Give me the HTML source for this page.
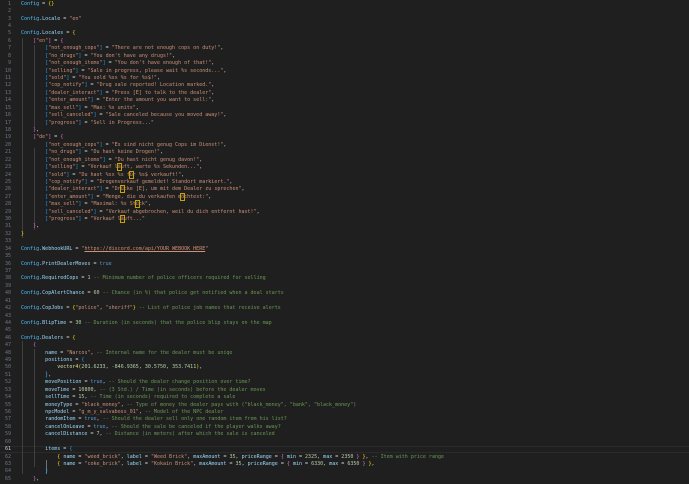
<!DOCTYPE html>
<html><head><meta charset="utf-8"><style>
html,body{margin:0;padding:0;background:#1f1f1f;width:689px;height:484px;overflow:hidden}
#ln{position:absolute;left:0;top:0.8px;width:11px;text-align:right;font:5.02px/7.42px "DejaVu Sans Mono","Liberation Mono",monospace;color:#6e7681;white-space:pre}
#code{position:absolute;left:21px;top:0.8px;font:5.02px/7.42px "DejaVu Sans Mono","Liberation Mono",monospace;color:#d4d4d4;white-space:pre;margin:0}
.c{color:#4fc1ff}.p{color:#9cdcfe}.s{color:#ce9178}.m{color:#6a9955}.n{color:#b5cea8}.k{color:#569cd6}.f{color:#dcdcaa}
.y{color:#ffd700}.v{color:#da70d6}.b{color:#179fff}.u{text-decoration:underline}
.x{outline:0.6px solid #c9a400}
.g{position:absolute;width:1px;background:#404040}
#cur{position:absolute;left:0;width:689px;top:445.7px;height:7.42px;border-top:1px solid #2a2a2a;border-bottom:1px solid #2a2a2a;box-sizing:border-box}
</style></head><body>
<div id="cur"></div>
<div class="g" style="left:22px;top:37.5px;height:200px"></div>
<div class="g" style="left:34px;top:45px;height:82px"></div>
<div class="g" style="left:34px;top:148px;height:82px"></div>
<div class="g" style="left:22px;top:341px;height:133px"></div>
<div class="g" style="left:34px;top:349px;height:118px"></div>
<div class="g" style="left:46px;top:371px;height:7px"></div>
<div class="g" style="left:46px;top:460px;height:14px;background:#707070"></div>
<div id="ln">1
2
3
4
5
6
7
8
9
10
11
12
13
14
15
16
17
18
19
20
21
22
23
24
25
26
27
28
29
30
31
32
33
34
35
36
37
38
39
40
41
42
43
44
45
46
47
48
49
50
51
52
53
54
55
56
57
58
59
60
<span style="color:#ccc">61</span>
62
63
64
65</div>
<pre id="code"><span class="c">Config</span> = <span class="y">{}</span>

<span class="c">Config</span>.<span class="p">Locale</span> = <span class="s">"en"</span>

<span class="c">Config</span>.<span class="p">Locales</span> = <span class="y">{</span>
    <span class="v">[</span><span class="s">"en"</span><span class="v">]</span> = <span class="v">{</span>
        <span class="b">[</span><span class="s">"not_enough_cops"</span><span class="b">]</span> = <span class="s">"There are not enough cops on duty!"</span>,
        <span class="b">[</span><span class="s">"no_drugs"</span><span class="b">]</span> = <span class="s">"You don't have any drugs!"</span>,
        <span class="b">[</span><span class="s">"not_enough_items"</span><span class="b">]</span> = <span class="s">"You don't have enough of that!"</span>,
        <span class="b">[</span><span class="s">"selling"</span><span class="b">]</span> = <span class="s">"Sale in progress, please wait %s seconds..."</span>,
        <span class="b">[</span><span class="s">"sold"</span><span class="b">]</span> = <span class="s">"You sold %sx %s for %s$!"</span>,
        <span class="b">[</span><span class="s">"cop_notify"</span><span class="b">]</span> = <span class="s">"Drug sale reported! Location marked."</span>,
        <span class="b">[</span><span class="s">"dealer_interact"</span><span class="b">]</span> = <span class="s">"Press [E] to talk to the dealer"</span>,
        <span class="b">[</span><span class="s">"enter_amount"</span><span class="b">]</span> = <span class="s">"Enter the amount you want to sell:"</span>,
        <span class="b">[</span><span class="s">"max_sell"</span><span class="b">]</span> = <span class="s">"Max: %s units"</span>,
        <span class="b">[</span><span class="s">"sell_canceled"</span><span class="b">]</span> = <span class="s">"Sale canceled because you moved away!"</span>,
        <span class="b">[</span><span class="s">"progress"</span><span class="b">]</span> = <span class="s">"Sell in Progress..."</span>
    <span class="v">}</span>,
    <span class="v">[</span><span class="s">"de"</span><span class="v">]</span> = <span class="v">{</span>
        <span class="b">[</span><span class="s">"not_enough_cops"</span><span class="b">]</span> = <span class="s">"Es sind nicht genug Cops im Dienst!"</span>,
        <span class="b">[</span><span class="s">"no_drugs"</span><span class="b">]</span> = <span class="s">"Du hast keine Drogen!"</span>,
        <span class="b">[</span><span class="s">"not_enough_items"</span><span class="b">]</span> = <span class="s">"Du hast nicht genug davon!"</span>,
        <span class="b">[</span><span class="s">"selling"</span><span class="b">]</span> = <span class="s">"Verkauf l<span class="x">ä</span>uft, warte %s Sekunden..."</span>,
        <span class="b">[</span><span class="s">"sold"</span><span class="b">]</span> = <span class="s">"Du hast %sx %s f<span class="x">ü</span>r %s$ verkauft!"</span>,
        <span class="b">[</span><span class="s">"cop_notify"</span><span class="b">]</span> = <span class="s">"Drogenverkauf gemeldet! Standort markiert."</span>,
        <span class="b">[</span><span class="s">"dealer_interact"</span><span class="b">]</span> = <span class="s">"Dr<span class="x">ü</span>cke [E], um mit dem Dealer zu sprechen"</span>,
        <span class="b">[</span><span class="s">"enter_amount"</span><span class="b">]</span> = <span class="s">"Menge, die du verkaufen m<span class="x">ö</span>chtest:"</span>,
        <span class="b">[</span><span class="s">"max_sell"</span><span class="b">]</span> = <span class="s">"Maximal: %s St<span class="x">ü</span>ck"</span>,
        <span class="b">[</span><span class="s">"sell_canceled"</span><span class="b">]</span> = <span class="s">"Verkauf abgebrochen, weil du dich entfernt hast!"</span>,
        <span class="b">[</span><span class="s">"progress"</span><span class="b">]</span> = <span class="s">"Verkauf l<span class="x">ä</span>uft..."</span>
    <span class="v">}</span>,
<span class="y">}</span>

<span class="c">Config</span>.<span class="p">WebhookURL</span> = <span class="s">"<span class="u">https://discord.com/api/YOUR_WEBOOK_HERE</span>"</span>

<span class="c">Config</span>.<span class="p">PrintDealerMoves</span> = <span class="k">true</span>

<span class="c">Config</span>.<span class="p">RequiredCops</span> = <span class="n">1</span> <span class="m">-- Minimum number of police officers required for selling</span>

<span class="c">Config</span>.<span class="p">CopAlertChance</span> = <span class="n">60</span> <span class="m">-- Chance (in %) that police get notified when a deal starts</span>

<span class="c">Config</span>.<span class="p">CopJobs</span> = <span class="y">{</span><span class="s">"police"</span>, <span class="s">"sheriff"</span><span class="y">}</span> <span class="m">-- List of police job names that receive alerts</span>

<span class="c">Config</span>.<span class="p">BlipTime</span> = <span class="n">30</span> <span class="m">-- Duration (in seconds) that the police blip stays on the map</span>

<span class="c">Config</span>.<span class="p">Dealers</span> = <span class="y">{</span>
    <span class="v">{</span>
        <span class="p">name</span> = <span class="s">"Narcos"</span>, <span class="m">-- Internal name for the dealer must be uniqe</span>
        <span class="p">positions</span> = <span class="b">{</span>
            <span class="f">vector4</span><span class="y">(</span><span class="n">201.6233</span>, <span class="n">-846.9365</span>, <span class="n">30.5750</span>, <span class="n">353.7411</span><span class="y">)</span>,
        <span class="b">}</span>,
        <span class="p">movePosition</span> = <span class="k">true</span>, <span class="m">-- Should the dealer change position over time?</span>
        <span class="p">moveTime</span> = <span class="n">10800</span>, <span class="m">-- (3 Std.) / Time (in seconds) before the dealer moves</span>
        <span class="p">sellTime</span> = <span class="n">15</span>, <span class="m">-- Time (in seconds) required to complete a sale</span>
        <span class="p">moneyType</span> = <span class="s">"black_money"</span>, <span class="m">-- Type of money the dealer pays with ("black_money", "bank", "black_money")</span>
        <span class="p">npcModel</span> = <span class="s">"g_m_y_salvaboss_01"</span>, <span class="m">-- Model of the NPC dealer</span>
        <span class="p">randomItem</span> = <span class="k">true</span>, <span class="m">-- Should the dealer sell only one random item from his list?</span>
        <span class="p">cancelOnLeave</span> = <span class="k">true</span>, <span class="m">-- Should the sale be canceled if the player walks away?</span>
        <span class="p">cancelDistance</span> = <span class="n">7</span>, <span class="m">-- Distance (in meters) after which the sale is canceled</span>

        <span class="p">items</span> = <span class="b">{</span>
            <span class="y">{</span> <span class="p">name</span> = <span class="s">"weed_brick"</span>, <span class="p">label</span> = <span class="s">"Weed Brick"</span>, <span class="p">maxAmount</span> = <span class="n">35</span>, <span class="p">priceRange</span> = <span class="v">{</span> <span class="p">min</span> = <span class="n">2325</span>, <span class="p">max</span> = <span class="n">2350</span> <span class="v">}</span> <span class="y">}</span>, <span class="m">-- Item with price range</span>
            <span class="y">{</span> <span class="p">name</span> = <span class="s">"coke_brick"</span>, <span class="p">label</span> = <span class="s">"Kokain Brick"</span>, <span class="p">maxAmount</span> = <span class="n">35</span>, <span class="p">priceRange</span> = <span class="v">{</span> <span class="p">min</span> = <span class="n">6330</span>, <span class="p">max</span> = <span class="n">6350</span> <span class="v">}</span> <span class="y">}</span>,
        <span class="b">}</span>
    <span class="v">}</span>,
</pre>
</body></html>
